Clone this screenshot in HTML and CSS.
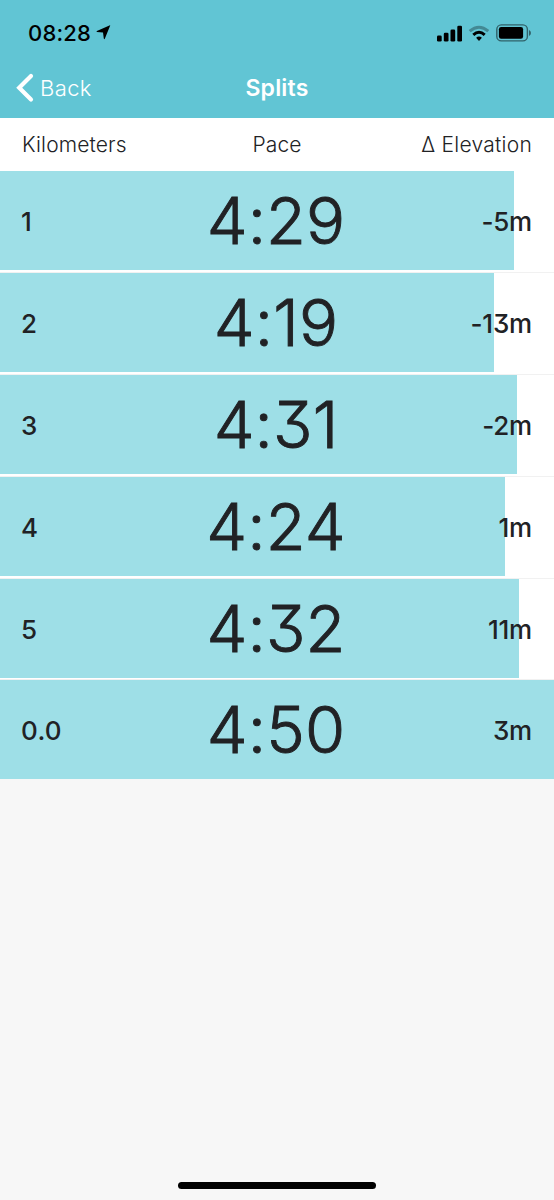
FILE: index.html
```html
<!DOCTYPE html>
<html lang="en">
<head>
<meta charset="utf-8">
<title>Splits</title>
<link rel="stylesheet" href="styles.css">
</head>
<body>
<div class="screen">
  <header class="top">
    <div class="status">
      <div class="clock"><span class="time">08:28</span>
        <svg class="location" width="15" height="15" viewBox="0 0 15 15"><path d="M14.200 .6Q14.600 .2 14 .3L.9 5.900Q0 6.500 1 6.900L7 7.400 7.800 13.600Q8.200 14.700 8.800 13.700Z"/></svg>
      </div>
      <div class="indicators">
        <svg width="26" height="17" viewBox="0 0 26 17"><rect x="0" y="10.500" width="4.700" height="6" rx="1.300"/><rect x="6.800" y="7.800" width="4.700" height="8.700" rx="1.300"/><rect x="13.500" y="4.500" width="4.700" height="12" rx="1.300"/><rect x="20.300" y=".8" width="4.700" height="15.700" rx="1.300"/></svg>
        <svg class="wifi" width="22" height="17" viewBox="0 0 22 17"><path class="wifi-off" d="M1.700 6.200Q11-1.700 20.300 6.200"/><path class="wifi-on" d="M5.300 9.800Q11 4.800 16.700 9.800"/><path d="M8.100 12.800Q11 10.400 13.900 12.800L11 15.900Z"/></svg>
        <svg class="battery" width="36" height="18" viewBox="0 0 36 18"><rect class="battery-shell" x=".8" y=".9" width="30.600" height="16" rx="4.500"/><rect x="2.900" y="3" width="24.200" height="11.800" rx="2.200"/><path class="battery-cap" d="M33 6Q35 7 35 9T33 12Z"/></svg>
      </div>
    </div>
    <nav class="nav">
      <a class="back"><svg width="18" height="30" viewBox="0 0 18 30"><path d="M15 3 3.200 14.800 15 26.600"/></svg><span>Back</span></a>
      <h1 class="title">Splits</h1>
    </nav>
  </header>
  <div class="columns"><span class="km-head">Kilometers</span><span class="pace-head">Pace</span><span class="elev-head">Δ Elevation</span></div>
  <main class="splits">
    <div class="row"><div class="bar" style="width:514px"></div><span class="km">1</span><span class="pace">4:29</span><span class="elev">-5m</span></div>
    <div class="row"><div class="bar" style="width:494px"></div><span class="km">2</span><span class="pace">4:19</span><span class="elev">-13m</span></div>
    <div class="row"><div class="bar" style="width:516.500px"></div><span class="km">3</span><span class="pace">4:31</span><span class="elev">-2m</span></div>
    <div class="row"><div class="bar" style="width:504.500px"></div><span class="km">4</span><span class="pace">4:24</span><span class="elev">1m</span></div>
    <div class="row"><div class="bar" style="width:518.500px"></div><span class="km">5</span><span class="pace">4:32</span><span class="elev">11m</span></div>
    <div class="row"><div class="bar" style="width:554px"></div><span class="km">0.0</span><span class="pace">4:50</span><span class="elev">3m</span></div>
  </main>
  <div class="home"></div>
</div>
</body>
</html>
```
FILE: styles.css
```css
* { box-sizing: border-box; }
body { margin: 0; background: #f7f7f7; font-family: Inter, "Liberation Sans", sans-serif; color: #212225; }
.screen { width: 554px; height: 1200px; display: flex; flex-direction: column; }
.top { height: 118px; background: #61c5d4; flex: none; }
.status { height: 62px; padding: 4px 22px 0 28px; display: flex; justify-content: space-between; align-items: center; color: #000; }
.clock { display: flex; align-items: center; gap: 5px; }
.time { font-size: 22px; font-weight: 550; line-height: 26px; letter-spacing: .2px; font-feature-settings: "calt" 0; }
.location { margin-top: -1px; }
.indicators { display: flex; align-items: center; }
.wifi { margin-left: 5px; }
.battery { margin-left: 6px; }
.wifi path { stroke: none; }
.wifi .wifi-off, .wifi .wifi-on { fill: none; stroke: #000; stroke-width: 3; }
.wifi .wifi-off { opacity: .3; }
.battery-shell { fill: none; stroke: #000; stroke-opacity: .5; stroke-width: 1.4; }
.battery-cap { opacity: .5; }
.nav { height: 52px; display: grid; grid-template-columns: 1fr auto 1fr; align-items: center; padding: 0 16px; color: #fff; }
.back { display: flex; align-items: center; gap: 6px; font-size: 22px; font-weight: 300; letter-spacing: .4px; }
.back path { fill: none; stroke: #fff; stroke-width: 4.2; stroke-linecap: round; stroke-linejoin: miter; }
.title { margin: 0; font-size: 23px; font-weight: 600; line-height: 30px; letter-spacing: .2px; }
.columns { height: 53px; flex: none; background: #fff; padding: 0 22px; display: grid; grid-template-columns: 1fr auto 1fr; align-items: center; font-size: 21px; font-weight: 330; letter-spacing: .15px; }
.elev-head { justify-self: end; letter-spacing: .25px; }
.row { height: 101.900px; background: #fff; display: grid; grid-template-columns: 21px 1fr auto 1fr 22px; grid-template-rows: 99px; align-items: center; box-shadow: inset 0 -1px #f1f1f1; }
.row:last-child { height: 99px; box-shadow: none; }
.bar { grid-area: 1 / 1 / 2 / -1; height: 99px; background: #9edfe7; }
.km { grid-area: 1 / 2; font-size: 26px; font-weight: 500; padding-top: 2px; letter-spacing: .3px; }
.pace { grid-area: 1 / 3; font-size: 65px; font-weight: 300; line-height: 99px; letter-spacing: .1px; padding-right: 1px; font-feature-settings: "calt" 0, "cv09"; -webkit-text-stroke: .9px #212225; }
.elev { grid-area: 1 / 4; justify-self: end; font-size: 26px; font-weight: 500; padding-top: 2px; letter-spacing: -.2px; font-feature-settings: "calt" 0, "cv09"; }
.home { width: 198px; height: 7px; border-radius: 4px; background: #000; margin: auto auto 11px; }
```
